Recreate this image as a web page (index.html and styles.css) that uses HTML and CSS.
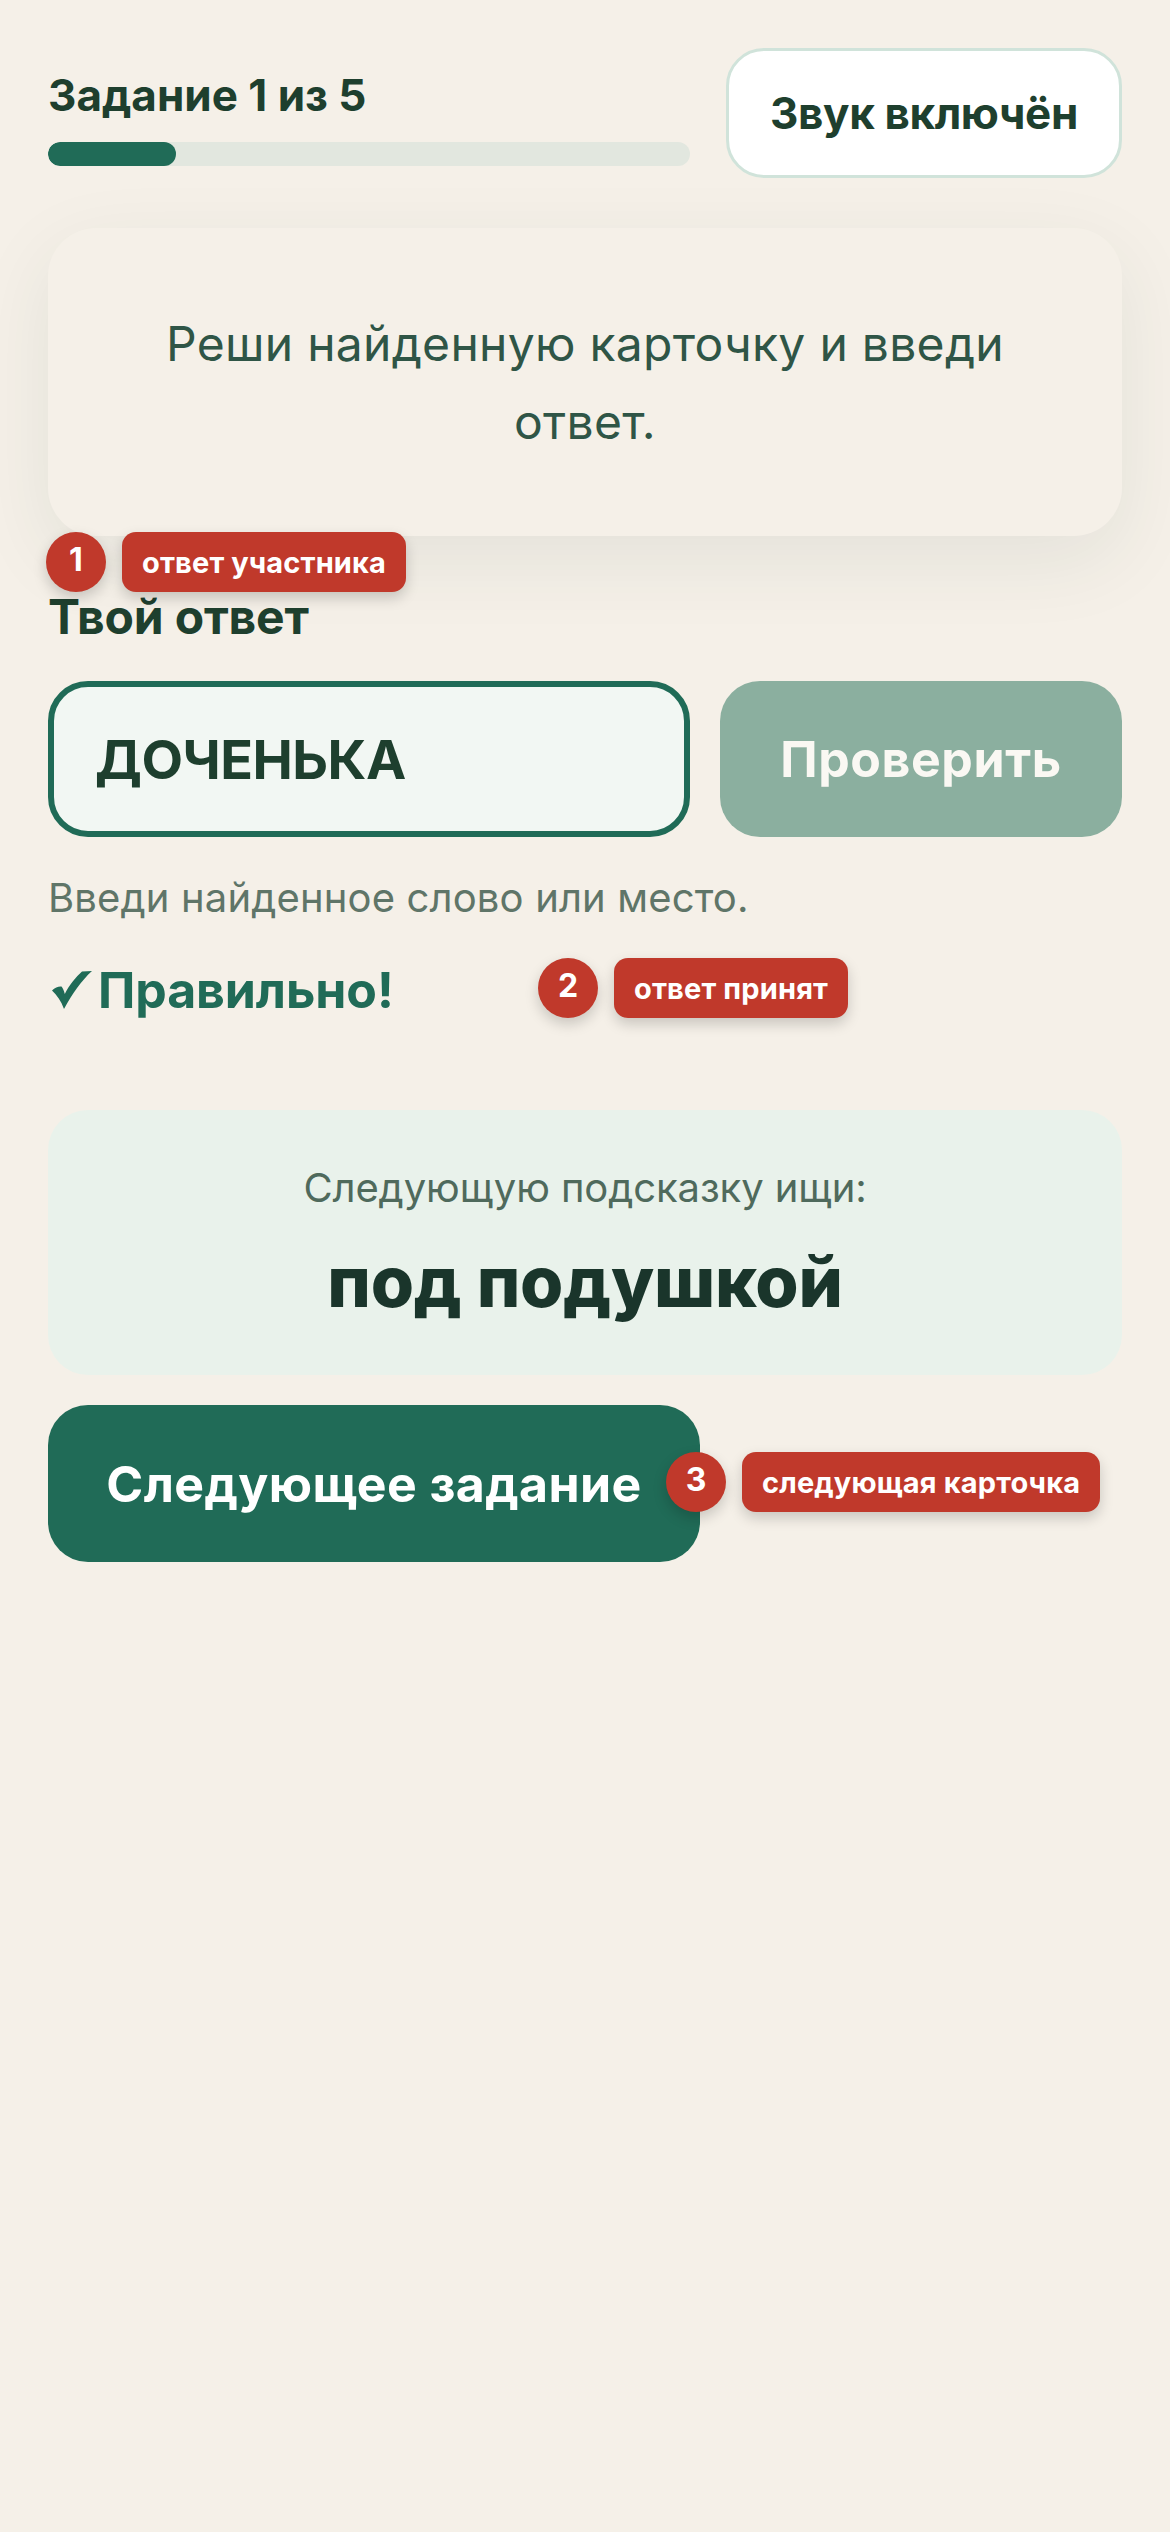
FILE: index.html
```html
<!DOCTYPE html>
<html lang="ru">
<head>
    <meta charset="UTF-8">
    <meta name="viewport" content="width=device-width, initial-scale=1.0">
    <title>Задание 1 из 5</title>
    <link rel="stylesheet" href="styles.css">
</head>
<body>
    <div class="page">
        <!-- Прогресс и звук -->
        <div class="topbar">
            <div class="progress">
                <div class="progress-label">Задание 1 из 5</div>
                <div class="progress-track">
                    <div class="progress-fill" style="width: 20%"></div>
                </div>
            </div>
            <button class="sound-btn">Звук включён</button>
        </div>

        <div class="task-card">Реши найденную карточку и введи ответ.</div>

        <!-- Ответ -->
        <label class="answer-label" for="answer">Твой ответ</label>
        <div class="answer-row">
            <input class="answer-input" id="answer" type="text" value="ДОЧЕНЬКА">
            <button class="check-btn">Проверить</button>
        </div>
        <div class="answer-hint">Введи найденное слово или место.</div>
        <div class="success">
            <svg class="success-icon" viewBox="0 0 40 38" aria-hidden="true">
                <path d="M0 19.5C3 16.5 7 15 9.5 15.5C11 17 12 20 12.8 23C17 14 24 6 30 0.5L40 0C30 9 20 23 12 38C9 30 5 24 0 19.5Z"/>
            </svg>
            <span>Правильно!</span>
        </div>

        <div class="next-card">
            <div class="next-title">Следующую подсказку ищи:</div>
            <div class="next-place">под подушкой</div>
        </div>
        <button class="next-btn">Следующее задание</button>

        <!-- Пометки поверх экрана -->
        <div class="note note-1"><span class="note-num">1</span><span class="note-text">ответ участника</span></div>
        <div class="note note-2"><span class="note-num">2</span><span class="note-text">ответ принят</span></div>
        <div class="note note-3"><span class="note-num">3</span><span class="note-text">следующая карточка</span></div>
    </div>
</body>
</html>
```

FILE: styles.css
```css
* {
    box-sizing: border-box;
}

body {
    margin: 0;
    background-color: #f5f0e8;
    color: #1e3f2e;
    font-family: "Inter", "Noto Sans", sans-serif;
}

.page {
    position: relative;
    min-height: 2532px;
    padding: 48px;
}

button,
input {
    font-family: inherit;
}

/* Верхняя панель */
.topbar {
    display: flex;
    align-items: center;
    gap: 36px;
}

.progress {
    flex: 1;
    padding-top: 10px;
}

.progress-label {
    font-size: 44px;
    line-height: 50px;
    font-weight: 700;
    margin-bottom: 22px;
}

.progress-track {
    height: 24px;
    border-radius: 12px;
    background-color: #e2e7df;
    overflow: hidden;
}

.progress-fill {
    height: 100%;
    border-radius: 12px;
    background-color: #206b57;
}

.sound-btn {
    width: 396px;
    height: 130px;
    border: 3px solid #d0e3da;
    border-radius: 38px;
    background-color: #fff;
    color: #1e3f2e;
    font-size: 44px;
    font-weight: 700;
    letter-spacing: -0.4px;
}

/* Карточка задания */
.task-card {
    margin-top: 50px;
    padding: 77px 96px 75px;
    border-radius: 48px;
    background-color: #f5f0e8;
    box-shadow: 0 24px 80px rgba(31, 61, 46, 0.08);
    color: #2f5546;
    font-size: 48px;
    line-height: 78px;
    text-align: center;
    letter-spacing: 0.28px;
}

/* Ответ */
.answer-label {
    display: block;
    margin-top: 53px;
    font-size: 48px;
    line-height: 56px;
    font-weight: 700;
    letter-spacing: -0.2px;
}

.answer-row {
    display: flex;
    gap: 30px;
    margin-top: 36px;
}

.answer-input {
    flex: 1;
    min-width: 0;
    height: 156px;
    padding: 0 41px;
    border: 6px solid #206b57;
    border-radius: 40px;
    background-color: #f2f7f3;
    color: #1e3f2e;
    font-size: 54px;
    font-weight: 700;
    letter-spacing: -0.5px;
}

.check-btn {
    width: 402px;
    height: 156px;
    border: none;
    border-radius: 40px;
    background-color: #8baf9f;
    color: #faf8f3;
    font-size: 50px;
    font-weight: 700;
    letter-spacing: 0.6px;
}

.answer-hint {
    margin-top: 36px;
    color: #5f7568;
    font-size: 40px;
    line-height: 50px;
    letter-spacing: 0.15px;
}

.success {
    display: flex;
    align-items: center;
    gap: 6px;
    margin-top: 36px;
    color: #206b57;
    font-size: 50px;
    line-height: 62px;
    font-weight: 700;
    letter-spacing: -0.1px;
}

.success-icon {
    width: 40px;
    height: 38px;
    margin-left: 4px;
    fill: #206b57;
}

/* Следующая подсказка */
.next-card {
    margin-top: 89px;
    height: 265px;
    padding-top: 53px;
    border-radius: 40px;
    background-color: #e9f2eb;
    text-align: center;
}

.next-title {
    color: #4f6a5c;
    font-size: 40px;
    line-height: 50px;
    letter-spacing: -0.1px;
}

.next-place {
    margin-top: 27px;
    color: #1a352b;
    font-size: 70px;
    line-height: 84px;
    font-weight: 800;
    letter-spacing: -0.2px;
}

.next-btn {
    display: block;
    margin-top: 30px;
    width: 652px;
    height: 157px;
    border: none;
    border-radius: 40px;
    background-color: #206b57;
    color: #fff;
    font-size: 50px;
    font-weight: 700;
    letter-spacing: 0.4px;
}

/* Пометки */
.note {
    position: absolute;
    display: flex;
    gap: 16px;
    height: 60px;
}

.note-1 {
    left: 46px;
    top: 532px;
}

.note-2 {
    left: 538px;
    top: 958px;
}

.note-3 {
    left: 666px;
    top: 1452px;
}

.note-num {
    width: 60px;
    height: 60px;
    padding-bottom: 6px;
    border-radius: 50%;
    background-color: #c0392b;
    color: #fff;
    font-size: 32px;
    font-weight: 700;
    line-height: 56px;
    text-align: center;
    box-shadow: 0 6px 14px rgba(0, 0, 0, 0.18);
}

.note-text {
    padding: 0 20px;
    border-radius: 14px;
    background-color: #c0392b;
    color: #fff;
    font-size: 29px;
    font-weight: 700;
    line-height: 62px;
    letter-spacing: 0.15px;
    box-shadow: 0 6px 14px rgba(0, 0, 0, 0.18);
}
```
